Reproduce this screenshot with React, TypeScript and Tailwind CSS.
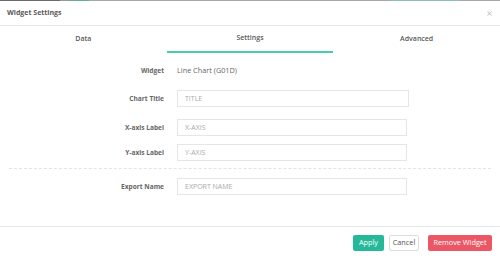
import { X } from 'lucide-react'

const fields = [
  { label: 'Chart Title', placeholder: 'TITLE', mt: 'mt-[11px]', w: 'w-[232px]' },
  { label: 'X-axis Label', placeholder: 'X-AXIS', mt: 'mt-[12px]', w: 'w-[230px]' },
  { label: 'Y-axis Label', placeholder: 'Y-AXIS', mt: 'mt-[8px]', w: 'w-[230px]' },
]

function Row({ label, children, className = '' }: { label: string; children: React.ReactNode; className?: string }) {
  return (
    <div className={`flex items-center ${className}`}>
      <div className="w-[165px] pr-px text-right text-[6.6px] font-bold text-[#666]">{label}</div>
      <div className="ml-[12px] flex">{children}</div>
    </div>
  )
}

function Field({ placeholder, w }: { placeholder: string; w: string }) {
  return (
    <input
      placeholder={placeholder}
      className={`${w} block h-[17px] border border-[#e6e6e6] bg-white px-[7px] text-[7px] text-[#555] outline-none placeholder:text-[#aaa]`}
    />
  )
}

export default function App() {
  return (
    <div
      className="flex h-[258px] w-[500px] flex-col overflow-hidden bg-white"
      style={{ fontFamily: '"Open Sans", "Liberation Sans", sans-serif' }}
    >
      {/* backdrop edge peeking above the modal */}
      <div className="flex h-px">
        <div className="w-[60px] bg-[#6a6a6a]" />
        <div className="w-[10px] bg-[#9a9a9a]" />
        <div className="w-[19px] bg-[#5fae98]" />
        <div className="w-[301px] bg-[#a8a8a8]" />
        <div className="w-[70px] bg-[#8cc0b0]" />
        <div className="flex-1 bg-[#a8a8a8]" />
      </div>

      <div className="flex h-[25px] items-center justify-between border-b border-[#e8e8e8] pl-[7px] pr-[7px]">
        <span className="text-[7px] font-bold text-[#5a5a5a]">Widget Settings</span>
        <X size={7} strokeWidth={3.5} className="text-[#c4c4c4]" />
      </div>

      <div className="grid h-[27px] grid-cols-3 text-[7px] font-semibold text-[#595959]">
        <div className="flex items-center justify-center pb-[1px]">Data</div>
        <div className="flex items-center justify-center border-b-2 border-[#48cfa9]">Settings</div>
        <div className="flex items-center justify-center pb-[1px]">Advanced</div>
      </div>

      <div className="flex flex-1 flex-col">
        <Row label="Widget" className="mt-[9px] h-[17px]">
          <span className="text-[7.3px] text-[#666]">Line Chart (G01D)</span>
        </Row>

        {fields.map((f) => (
          <Row key={f.label} label={f.label} className={f.mt}>
            <Field placeholder={f.placeholder} w={f.w} />
          </Row>
        ))}

        <div className="mx-[9px] mt-[7px] border-t border-dashed border-[#e3e3e3]" />

        <Row label="Export Name" className="mt-[9px]">
          <Field placeholder="EXPORT NAME" w="w-[230px]" />
        </Row>
      </div>

      <div className="flex h-[32px] items-center justify-end border-t border-[#e8e8e8] pr-[8px] text-[7.3px]">
        <button className="h-[16px] w-[31px] rounded-[2px] bg-[#26b999] text-white">Apply</button>
        <button className="ml-[5px] h-[16px] w-[30px] rounded-[2px] border border-[#ddd] bg-white text-[#555]">Cancel</button>
        <button className="ml-[9px] h-[16px] w-[64px] rounded-[2px] bg-[#ec5766] text-white">Remove Widget</button>
      </div>
    </div>
  )
}
